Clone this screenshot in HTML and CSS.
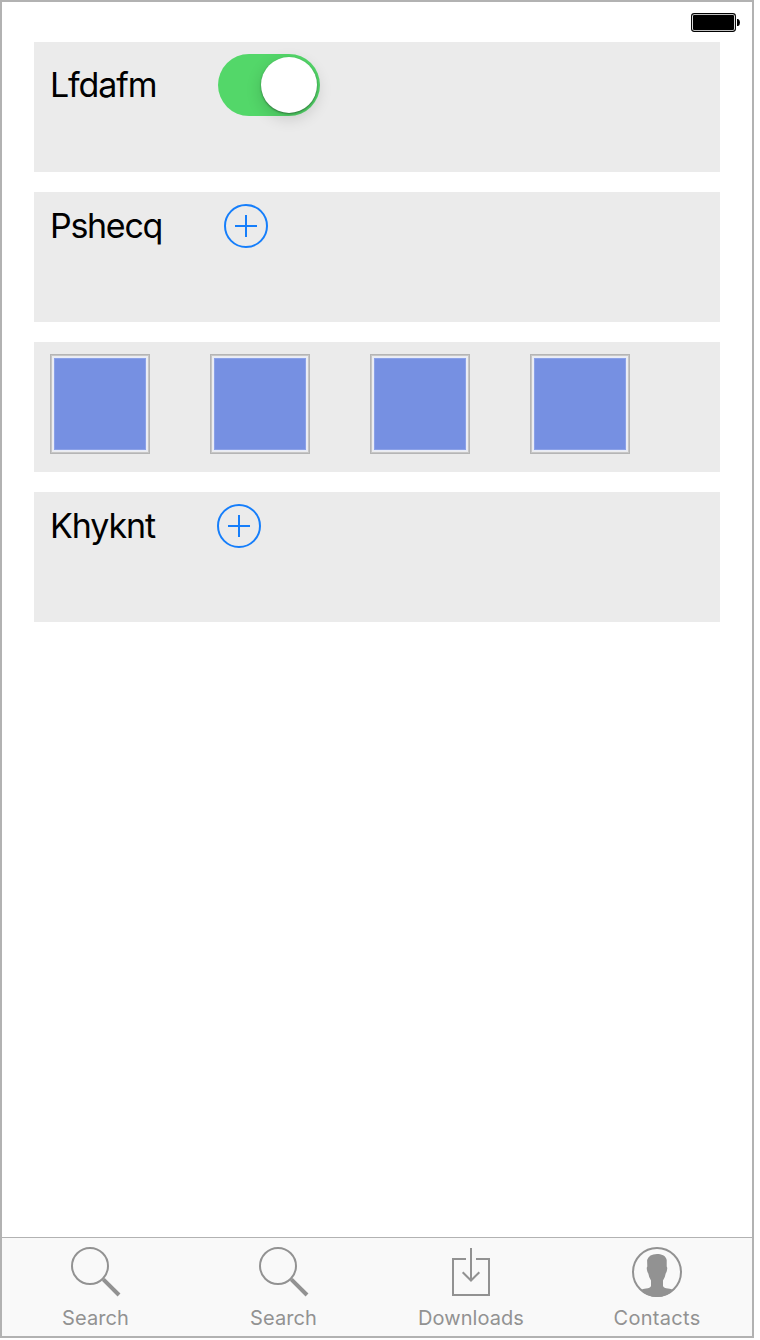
FILE: index.html
```html
<!DOCTYPE html>
<html lang="en">
<head>
<meta charset="utf-8">
<title>Settings</title>
<link rel="stylesheet" href="styles.css">
</head>
<body>
<div class="screen">
  <header class="status-bar">
    <svg class="battery" width="50" height="20" viewBox="0 0 50 20">
      <rect x="0.6" y="0.6" width="43.8" height="17.8" rx="2.6" fill="#fff" stroke="#000" stroke-width="1.1"/>
      <rect x="2" y="2" width="41" height="15" rx="1" fill="#000"/>
      <path d="M46 6h1.2Q49 7 49 9.5T47.2 13H46z" fill="#000"/>
    </svg>
  </header>
  <main class="rows">
    <section class="row">
      <span class="label label-switch">Lfdafm</span>
      <span class="switch"><span class="knob"></span></span>
    </section>
    <section class="row">
      <span class="label label-second">Pshecq</span>
      <svg class="add" width="44" height="44" viewBox="0 0 44 44"><circle cx="22" cy="22" r="21"/><path d="M11 22h22M22 11v22"/></svg>
    </section>
    <section class="row tiles">
      <span class="tile"></span><span class="tile"></span><span class="tile"></span><span class="tile"></span>
    </section>
    <section class="row">
      <span class="label label-last">Khyknt</span>
      <svg class="add" width="44" height="44" viewBox="0 0 44 44"><circle cx="22" cy="22" r="21"/><path d="M11 22h22M22 11v22"/></svg>
    </section>
  </main>
  <nav class="tabs">
    <div class="tab">
      <svg class="icon" width="50" height="52" viewBox="0 0 50 52"><circle cx="19" cy="20" r="18"/><path d="M32.3 33.3L48 49" stroke-width="4"/></svg>
      <span class="caption caption-search">Search</span>
    </div>
    <div class="tab">
      <svg class="icon" width="50" height="52" viewBox="0 0 50 52"><circle cx="19" cy="20" r="18"/><path d="M32.3 33.3L48 49" stroke-width="4"/></svg>
      <span class="caption caption-search">Search</span>
    </div>
    <div class="tab">
      <svg class="icon" width="50" height="52" viewBox="0 0 50 52"><path d="M20 13H7v36h36V13H30M25 2v32M16.7 26.2L25 34.5l8.3-8.3"/></svg>
      <span class="caption caption-downloads">Downloads</span>
    </div>
    <div class="tab">
      <svg class="icon" width="50" height="52" viewBox="0 0 50 52"><circle cx="25" cy="26" r="24"/><path class="person" d="M25 8C29 8 34 9.500 34.700 14L34.700 20.500Q35.600 21.500 35 24Q34.700 26.300 33.700 27.500Q33.200 31 31 34.500L31 40Q31.800 42 36 42.500Q39 42.900 41.500 44.200Q35 51 25 51Q15 51 8.500 44.200Q11 42.900 14 42.500Q18.200 42 19 40L19 34.500Q16.800 31 16.300 27.500Q15.300 26.300 15 24Q14.400 21.500 15.300 20.500L15.100 14Q17 8 25 8Z"/></svg>
      <span class="caption">Contacts</span>
    </div>
  </nav>
</div>
</body>
</html>
```
FILE: styles.css
```css
body {
  margin: 0;
  background: #fff;
  font-family: Inter, "Liberation Sans", sans-serif;
}

.screen {
  box-sizing: border-box;
  width: 754px;
  height: 1338px;
  border: 2px solid #b2b2b2;
  display: flex;
  flex-direction: column;
}

.status-bar {
  height: 40px;
  box-sizing: border-box;
  padding: 11px 11px 0 0;
  display: flex;
  justify-content: flex-end;
  align-items: flex-start;
}

.rows {
  flex: 1;
  padding: 0 32px;
  display: flex;
  flex-direction: column;
  gap: 20px;
}

.row {
  box-sizing: border-box;
  height: 130px;
  padding: 12px 16px;
  background: #ebebeb;
  display: flex;
  align-items: flex-start;
}

.label {
  font-size: 34px;
  line-height: 44px;
  letter-spacing: -1.1px;
  color: #000;
  white-space: nowrap;
}

.label-switch {
  width: 168px;
  line-height: 62px;
}

.label-second {
  width: 174px;
  letter-spacing: -1.3px;
}

.label-last {
  width: 167px;
}

.switch {
  box-sizing: border-box;
  width: 102px;
  height: 62px;
  padding: 3px;
  border-radius: 31px;
  background: #53d769;
  display: flex;
  justify-content: flex-end;
}

.knob {
  width: 56px;
  height: 56px;
  border-radius: 50%;
  background: #fff;
  box-shadow: 0 1px 2px rgba(0, 0, 0, 0.4), 0 5px 16px rgba(0, 0, 0, 0.16);
}

.add {
  fill: none;
  stroke: #157efb;
  stroke-width: 2;
}

.tiles {
  gap: 60px;
}

.tile {
  box-sizing: border-box;
  width: 100px;
  height: 100px;
  border: 1px solid #b5b5b5;
  background: #7690e2;
  box-shadow: inset 0 0 0 1px #c6c6c6, inset 0 0 0 2px #ececee, inset 0 0 0 3px #e8ecf9, inset 0 0 0 4px #8ba1e7;
}

.tabs {
  box-sizing: border-box;
  height: 99px;
  border-top: 1px solid #b2b2b2;
  background: #f9f9f9;
  display: grid;
  grid-template-columns: 188px 188px 186px 186px;
}

.tab {
  display: flex;
  flex-direction: column;
  align-items: center;
  padding-top: 8px;
}

.icon {
  fill: none;
  stroke: #929292;
  stroke-width: 2;
}

.person {
  fill: #929292;
  stroke: none;
}

.caption {
  margin-top: 8px;
  font-size: 20px;
  line-height: 25px;
  letter-spacing: 0.3px;
  color: #929292;
  white-space: nowrap;
}

.caption-search {
  margin-right: 1px;
  letter-spacing: 0.1px;
}

.caption-downloads {
  letter-spacing: 0.05px;
}
```
